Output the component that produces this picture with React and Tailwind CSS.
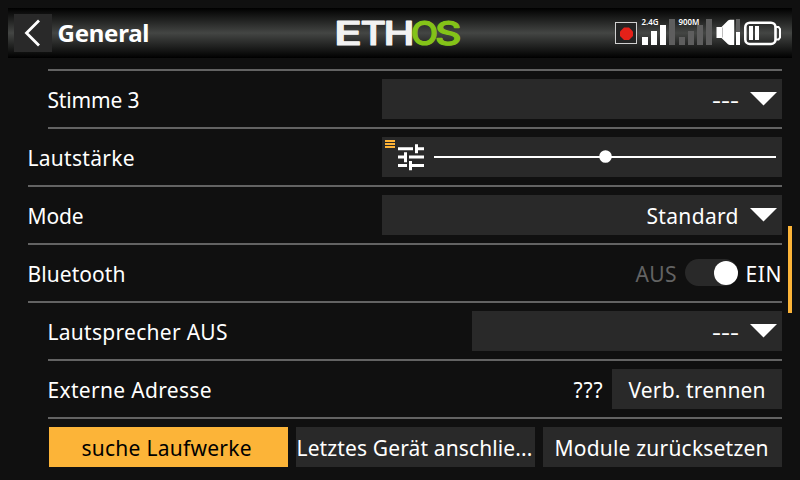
import React from "react";

function Label({ children, size = 21, width, className = "" }) {
  return (
    <svg width={width} height="40" viewBox={`0 0 ${width} 40`} className={`shrink-0 overflow-visible ${className}`} fill="currentColor">
      <text x="-0.5" y="29" fontSize={size} textLength={width} lengthAdjust="spacing">{children}</text>
    </svg>
  );
}

function Dashes() {
  return (
    <svg width="27" height="40" viewBox="0 0 27 40" className="shrink-0 overflow-visible" fill="currentColor">
      <text x="0" y="28.5" fontSize="21" fontWeight="400" textLength="27" lengthAdjust="spacingAndGlyphs">---</text>
    </svg>
  );
}

function Triangle() {
  return (
    <svg width="27" height="14" viewBox="0 0 27 14" className="shrink-0 -mt-px">
      <path d="M0 0H27L13.5 13.5Z" fill="#fff" />
    </svg>
  );
}

function Row({ inset, children }) {
  return (
    <div className={`h-[58px] border-b-2 border-[#636363] pt-2 flex items-start ${inset ? "ml-5" : ""}`}>
      {children}
    </div>
  );
}

function Select({ wide, children }) {
  return (
    <div className={`ml-auto h-10 bg-[#292929] flex items-center justify-end pr-[5px] gap-[11px] ${wide ? "w-[400px]" : "w-[310px]"}`}>
      {children}
      <Triangle />
    </div>
  );
}

function Logo() {
  return (
    <svg width="126" height="50" viewBox="0 0 126 50" className="ml-[186px] shrink-0 overflow-visible" fontFamily="Inter, sans-serif" strokeLinejoin="round">
      <text y="37.3" fontSize="33" fontWeight="500" strokeWidth="1.2">
        <tspan fill="#f2f2f2" stroke="#f2f2f2" x="-2" textLength="28" lengthAdjust="spacingAndGlyphs">E</tspan>
        <tspan fill="#f2f2f2" stroke="#f2f2f2" x="24.5" textLength="25.5" lengthAdjust="spacingAndGlyphs">T</tspan>
        <tspan fill="#f2f2f2" stroke="#f2f2f2" x="47.5" textLength="31" lengthAdjust="spacingAndGlyphs">H</tspan>
        <tspan fill="#84c318" stroke="#84c318" x="75" textLength="27" lengthAdjust="spacingAndGlyphs">O</tspan>
        <tspan fill="#84c318" stroke="#84c318" x="99" textLength="26.5" lengthAdjust="spacingAndGlyphs">S</tspan>
      </text>
    </svg>
  );
}

function Status() {
  return (
    <svg width="168" height="36" viewBox="614 16 168 36" className="ml-auto mr-[10px] shrink-0" fill="#fff" fontFamily='"Noto Sans", sans-serif'>
      <rect x="615.5" y="23.5" width="21" height="21" fill="#242424" stroke="#d0d0d0" />
      <path d="M624 28.5h5l4 4v4.5l-4 4h-5l-4-4v-4.5z" fill="#e52119" />
      <path d="M642 38h6v8h-6zM651 32h6v14h-6zM660 26h6v20h-6z" />
      <path fill="#5e5e5e" d="M669 20h6v26h-6zM679 38h6v8h-6zM688 32h6v14h-6zM697 26h6v20h-6zM706 20h6v26h-6z" />
      <text x="641.5" y="26.3" fontSize="8.5" fontWeight="600" textLength="17" lengthAdjust="spacingAndGlyphs">2.4G</text>
      <text x="678.5" y="26.3" fontSize="8.5" fontWeight="600" textLength="21" lengthAdjust="spacingAndGlyphs">900M</text>
      <path d="M716.5 28h5l6.5-6.5q1-.7 2-.7h4.2v25.2h-4.2q-1 0-2-.7l-6.5-6.3h-5z" />
      <path d="M722.5 28.5v10" stroke="#a0a0a0" strokeWidth="0.7" />
      <path fill="#5e5e5e" d="M736 20h4v13h-4z" />
      <path d="M736 33h4v13h-4z" />
      <rect x="745.3" y="23.7" width="30.2" height="21.3" rx="4.5" fill="none" stroke="#fff" strokeWidth="2.6" />
      <path d="M776 28h2.5l1.5 2v8.5l-1.5 2H776" fill="none" stroke="#fff" strokeWidth="2" />
      <path d="M749 27h4v14h-4zM755 27h4v14h-4z" />
    </svg>
  );
}

export default function App() {
  return (
    <div className="relative w-[800px] h-[480px] overflow-hidden bg-[#101010] p-2 text-white font-['Noto_Sans',sans-serif]">
      <header className="h-[50px] flex items-center bg-[linear-gradient(to_bottom,#000_0%,#444644_50%,#000_100%)]">
        <div className="ml-1.5 w-[38px] h-[38px] bg-[#292929] shrink-0">
          <svg width="38" height="38" viewBox="0 0 38 38" fill="none" stroke="#fff" strokeWidth="2.8">
            <path d="M25 6.5L12.5 19L25 31.5" />
          </svg>
        </div>
        <Label width={92} size={24} className="ml-[6px] font-bold">General</Label>
        <Logo />
        <Status />
      </header>

      <main className="mt-[11px] ml-5 mr-[10px]">
        <div className="ml-5 h-0.5 bg-[#636363]" />
        <Row inset>
          <Label width={92}>Stimme 3</Label>
          <Select wide><Dashes /></Select>
        </Row>
        <Row>
          <Label width={107}>Lautstärke</Label>
          <div className="ml-auto w-[400px] h-10 bg-[#292929]">
            <svg width="400" height="40" viewBox="0 0 400 40" fill="#fff">
              <path fill="#ffb437" d="M3 3h10v2H3zM3 6h10v2H3zM3 9h10v2H3z" />
              <path d="M16 10.2h15v3H16zM33 7.2h3v3h6v3h-6v3h-3zM16 18.6h6v-3.4h3v10h-3v-3.6h-6zM27 18.6h15v3H27zM16 27h9v3h-9zM27 24h3v3h12v3H30v3.2h-3z" />
              <path d="M52 19h342v2H52z" />
              <circle cx="223.5" cy="19.5" r="6.3" />
            </svg>
          </div>
        </Row>
        <Row>
          <Label width={56}>Mode</Label>
          <Select wide><Label width={92}>Standard</Label></Select>
        </Row>
        <Row>
          <Label width={98}>Bluetooth</Label>
          <div className="ml-auto flex items-start">
            <Label width={41} className="text-[#636363]">AUS</Label>
            <div className="ml-[8px] mt-[6px] w-[53px] h-[27px] rounded-full bg-[#292929] flex items-center justify-end">
              <div className="size-[24px] rounded-full bg-white" />
            </div>
            <Label width={36} className="ml-[8px]">EIN</Label>
          </div>
        </Row>
        <Row inset>
          <Label width={180}>Lautsprecher AUS</Label>
          <Select><Dashes /></Select>
        </Row>
        <Row inset>
          <Label width={164}>Externe Adresse</Label>
          <Label width={29} className="ml-auto mr-[9px]">???</Label>
          <div className="w-[170px] h-10 bg-[#292929] flex justify-center">
            <Label width={137}>Verb. trennen</Label>
          </div>
        </Row>
        <div className="ml-5 pt-2 flex">
          <div className="ml-px w-[239px] h-10 bg-[#fcb438] text-black flex pl-[33px]">
            <Label width={170}>suche Laufwerke</Label>
          </div>
          <div className="ml-2 w-[239px] h-10 bg-[#292929] flex pl-px">
            <Label width={236}>Letztes Gerät anschlie...</Label>
          </div>
          <div className="ml-2 w-[239px] h-10 bg-[#292929] flex pl-[12px]">
            <Label width={214}>Module zurücksetzen</Label>
          </div>
        </div>
      </main>
      <div className="absolute left-[788px] top-[226px] w-1 h-[87px] bg-[#fcb438]" />
    </div>
  );
}
